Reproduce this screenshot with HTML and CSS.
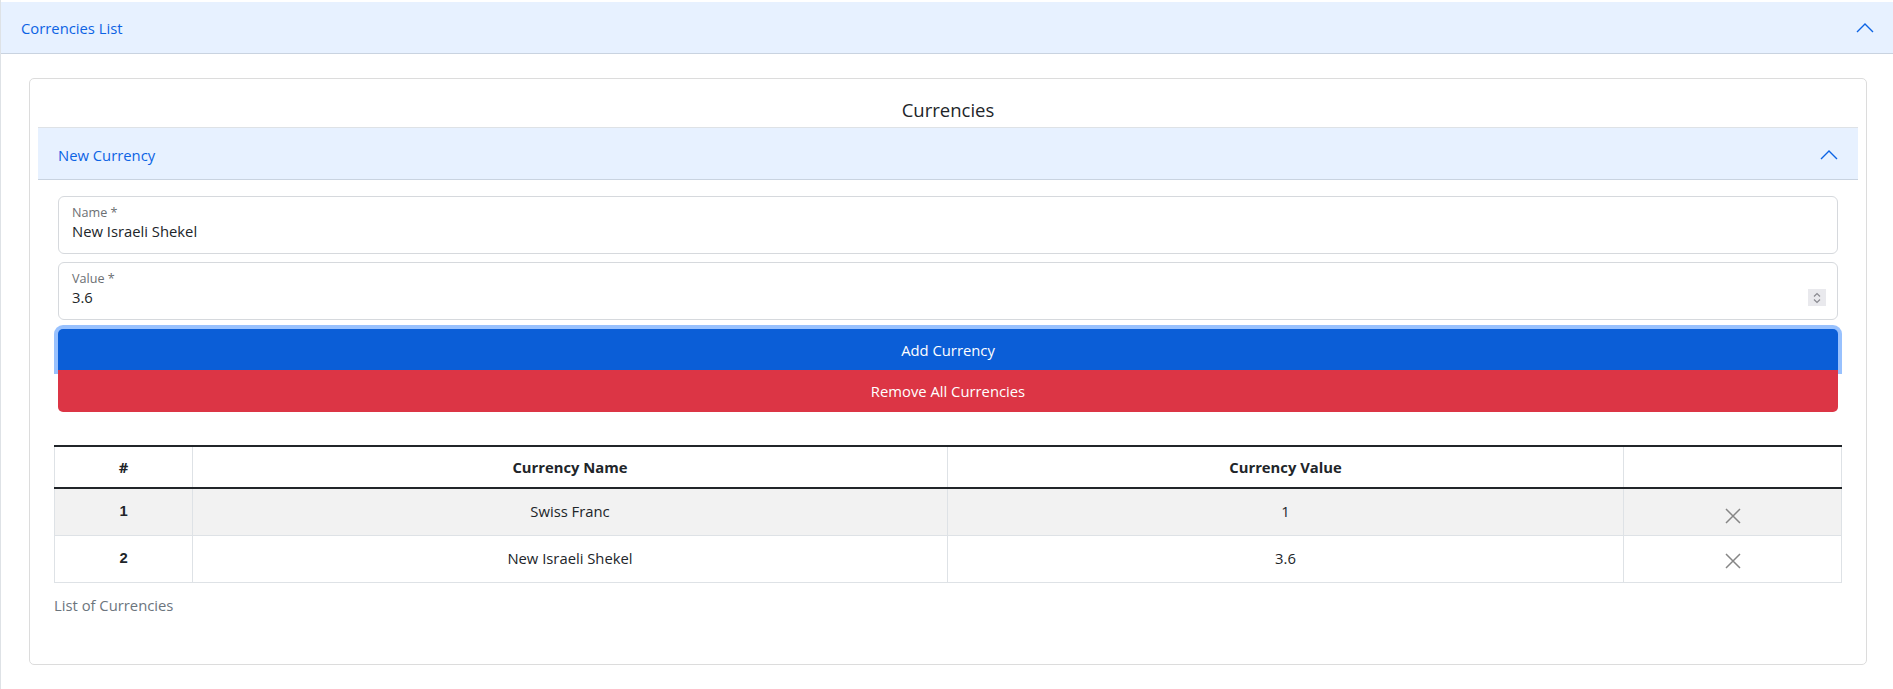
FILE: index.html
```html
<!DOCTYPE html>
<html lang="en">
<head>
<meta charset="utf-8">
<title>Currencies</title>
<link rel="stylesheet" href="styles.css">
</head>
<body>
<div class="outer">
  <div class="acc-header outer-header">
    <span class="acc-title">Correncies List</span>
    <svg class="chev" width="18" height="11" viewBox="0 0 18 11"><path d="M1 10 L9 2 L17 10" fill="none" stroke="#0c63e4" stroke-width="1.4"/></svg>
  </div>
  <div class="outer-body">
    <div class="card">
      <h5 class="card-title">Currencies</h5>
      <div class="inner">
        <div class="acc-header inner-header">
          <span class="acc-title">New Currency</span>
          <svg class="chev" width="18" height="11" viewBox="0 0 18 11"><path d="M1 10 L9 2 L17 10" fill="none" stroke="#0c63e4" stroke-width="1.4"/></svg>
        </div>
        <div class="inner-body">
          <div class="field">
            <div class="field-text">
              <div class="field-label">Name *</div>
              <div class="field-value">New Israeli Shekel</div>
            </div>
          </div>
          <div class="field">
            <div class="field-text">
              <div class="field-label">Value *</div>
              <div class="field-value">3.6</div>
            </div>
            <div class="spinner">
              <svg width="10" height="14" viewBox="0 0 10 14"><path d="M2 5.5 L5 2.5 L8 5.5 M2 8.5 L5 11.5 L8 8.5" fill="none" stroke="#8a8a90" stroke-width="1.2"/></svg>
            </div>
          </div>
          <div class="btn-group">
            <button class="btn btn-add">Add Currency</button>
            <button class="btn btn-remove">Remove All Currencies</button>
          </div>
        </div>
      </div>
      <table class="table">
        <caption>List of Currencies</caption>
        <colgroup>
          <col class="c1"><col class="c2"><col class="c3"><col class="c4">
        </colgroup>
        <thead>
          <tr><th>#</th><th>Currency Name</th><th>Currency Value</th><th></th></tr>
        </thead>
        <tbody>
          <tr class="striped"><th>1</th><td>Swiss Franc</td><td>1</td><td class="act"><svg class="x" width="16" height="16" viewBox="0 0 16 16"><path d="M1 1 L15 15 M15 1 L1 15" stroke="#868686" stroke-width="1.5"/></svg></td></tr>
          <tr><th>2</th><td>New Israeli Shekel</td><td>3.6</td><td class="act"><svg class="x" width="16" height="16" viewBox="0 0 16 16"><path d="M1 1 L15 15 M15 1 L1 15" stroke="#868686" stroke-width="1.5"/></svg></td></tr>
        </tbody>
      </table>
    </div>
  </div>
</div>
</body>
</html>
```

FILE: styles.css
```css
* { box-sizing: border-box; }
html, body { margin: 0; padding: 0; background: #fff; }
body {
  font-family: "Open Sans", "Noto Sans", sans-serif;
  font-size: 14.8px;
  color: #212529;
}
.outer {
  border-left: 1px solid #dee2e6;
  padding-top: 2px;
  min-height: 689px;
}
.acc-header {
  display: flex;
  align-items: center;
  justify-content: space-between;
  background: #e7f1ff;
  color: #0c63e4;
  border-bottom: 1px solid #c9d3e0;
}
.outer-header {
  height: 52px;
  padding: 0 19px 0 20px;
}
.acc-title { line-height: 20px; }
.outer-body {
  padding: 24px 26px 24px 28px;
}
.card {
  border: 1px solid #dcdcdc;
  border-radius: 5px;
  padding: 19px 8px 41px 8px;
}
.card-title {
  margin: 0 0 5px 0;
  font-size: 18.5px;
  font-weight: 400;
  line-height: 24px;
  text-align: center;
  color: #212529;
}
.inner-header {
  height: 53px;
  border-top: 1px solid #dee2e6;
  padding: 2px 20px 0 20px;
}
.inner-body {
  padding: 16px 20px 16px 20px;
}
.field {
  display: flex;
  align-items: flex-end;
  height: 58px;
  border: 1px solid #d6d9dd;
  border-radius: 6px;
  padding: 0 11px 12px 13px;
  margin-bottom: 8px;
}
.field-text { flex: 1; }
.field-label {
  font-size: 12.6px;
  color: #6c6f73;
  line-height: 16px;
}
.field-value {
  font-size: 14.8px;
  line-height: 20px;
  color: #212529;
}
.spinner {
  width: 18px;
  height: 17px;
  background: #e9e9ed;
  display: flex;
  align-items: center;
  justify-content: center;
  margin-bottom: 1px;
}
.btn-group {
  display: flex;
  flex-direction: column;
  margin-top: 9px;
}
.btn {
  display: block;
  width: 100%;
  border: 0;
  font-family: inherit;
  font-size: 14.8px;
  color: #fff;
  text-align: center;
  padding: 0;
}
.btn-add {
  height: 41px;
  background: #0b5ed7;
  border-radius: 5px 5px 0 0;
  box-shadow: 0 0 0 4px rgba(49, 132, 253, 0.5);
  padding-top: 1px;
}
.btn-remove {
  position: relative;
  height: 42px;
  background: #dc3545;
  border-radius: 0 0 5px 5px;
}
.table {
  width: calc(100% - 32px);
  margin: 17px 16px 0 16px;
  border-collapse: collapse;
  caption-side: bottom;
  text-align: center;
}
.table caption {
  text-align: left;
  color: #6c757d;
  padding: 12px 0 8px 0;
  line-height: 20px;
}
.c1 { width: 138px; }
.c2 { width: 755px; }
.c3 { width: 676px; }
.table thead tr { border-top: 2px solid #212529; border-bottom: 2px solid #212529; }
.table thead th { height: 42px; border-left: 1px solid #dee2e6; border-right: 1px solid #dee2e6; font-weight: 700; padding: 0; line-height: 20px; }
.table tbody th, .table tbody td {
  height: 47px;
  border: 1px solid #dee2e6;
  padding: 0 0 2px 0;
  line-height: 20px;
}
.table tbody th { font-family: "Liberation Sans", Arial, sans-serif; font-weight: 700; }
.table tbody tr.striped th, .table tbody tr.striped td { background: #f2f2f2; }
.act .x { display: block; margin: 6px auto 0 auto; }
.table tbody tr.striped .act .x { margin-top: 10px; }
```
